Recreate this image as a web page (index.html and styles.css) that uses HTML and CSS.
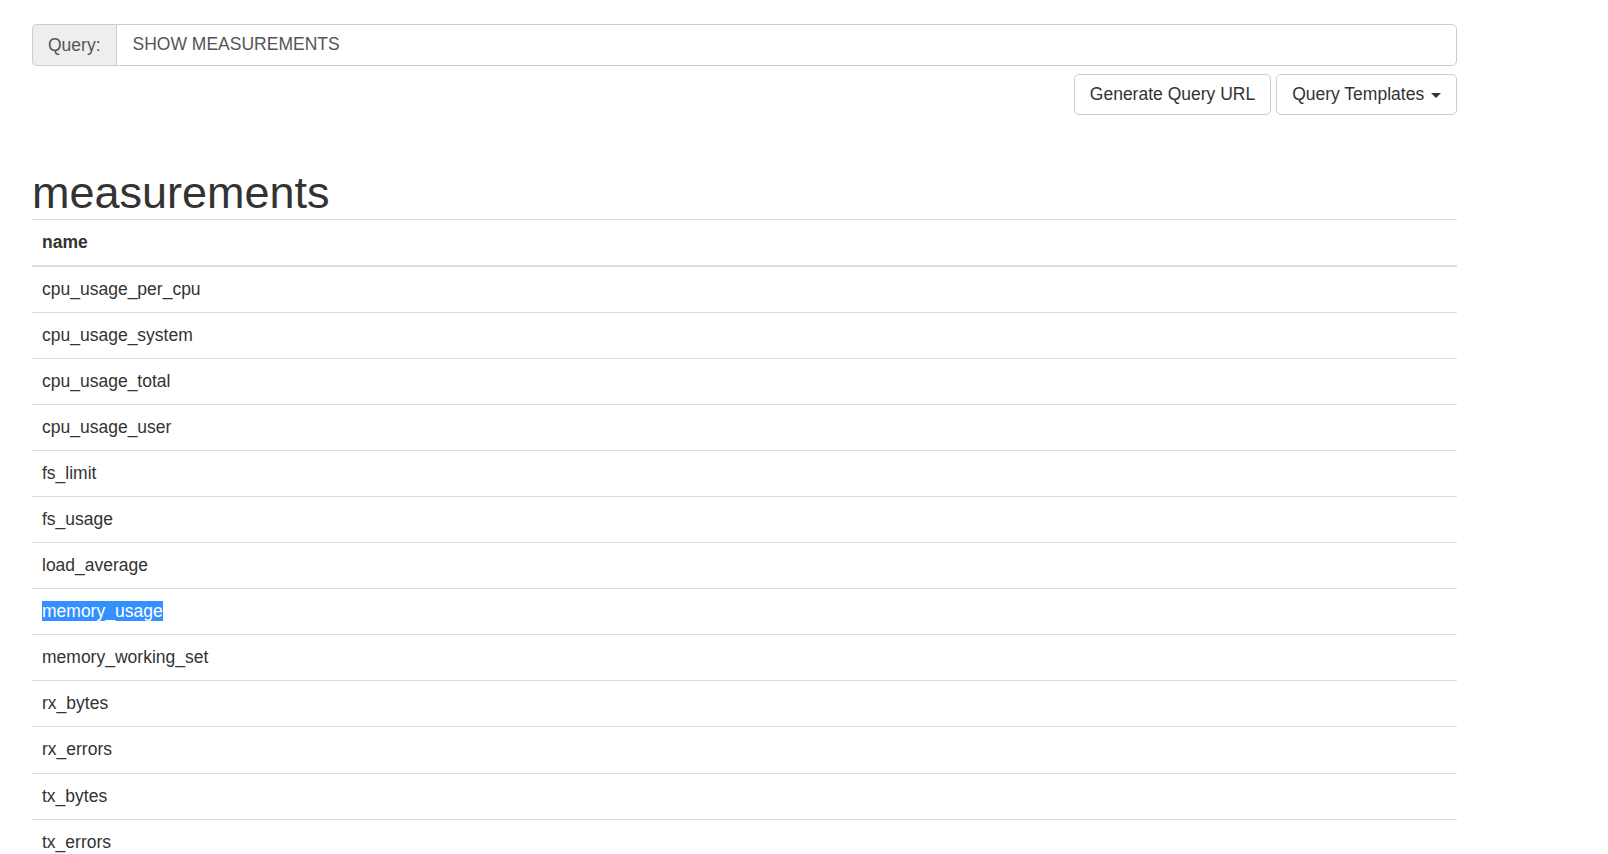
FILE: index.html
```html
<!DOCTYPE html>
<html lang="en">
<head>
  <meta charset="UTF-8">
  <title>InfluxDB - Admin Interface</title>
  <link rel="stylesheet" href="styles.css">
</head>
<body>

<div class="container">
  <div class="input-group">
    <span class="input-addon">Query:</span>
    <input class="query-input" type="text" value="SHOW MEASUREMENTS">
  </div>

  <div class="actions">
    <button class="btn">Generate Query URL</button>
    <button class="btn">Query Templates <span class="caret"></span></button>
  </div>

  <h1>measurements</h1>

  <table class="table">
    <thead>
      <tr><th>name</th></tr>
    </thead>
    <tbody>
      <tr><td>cpu_usage_per_cpu</td></tr>
      <tr><td>cpu_usage_system</td></tr>
      <tr><td>cpu_usage_total</td></tr>
      <tr><td>cpu_usage_user</td></tr>
      <tr><td>fs_limit</td></tr>
      <tr><td>fs_usage</td></tr>
      <tr><td>load_average</td></tr>
      <tr><td><span class="selected">memory_usage</span></td></tr>
      <tr><td>memory_working_set</td></tr>
      <tr><td>rx_bytes</td></tr>
      <tr><td>rx_errors</td></tr>
      <tr><td>tx_bytes</td></tr>
      <tr><td>tx_errors</td></tr>
    </tbody>
  </table>
</div>

</body>
</html>
```

FILE: styles.css
```css
* { box-sizing: border-box; }
body {
  margin: 0;
  background: #fff;
  color: #333;
  font-family: "Liberation Sans", Arial, Helvetica, sans-serif;
  font-size: 17.5px;
  line-height: 25px;
}
.container {
  width: 1457px;
  padding: 24px 0 0 32px;
}
.input-group {
  display: flex;
  height: 42px;
}
.input-addon {
  padding: 7px 15px;
  background: #eee;
  color: #555;
  border: 1px solid #ccc;
  border-right: none;
  border-radius: 5px 0 0 5px;
  line-height: 26px;
}
.query-input {
  flex: 1;
  height: 42px;
  padding: 6px 15px 8px 16px;
  border: 1px solid #ccc;
  border-radius: 0 5px 5px 0;
  font-family: inherit;
  font-size: 17.5px;
  color: #555;
  outline: none;
}
.actions {
  display: flex;
  justify-content: flex-end;
  gap: 5px;
  margin-top: 8px;
}
.btn {
  height: 41px;
  padding: 7px 15px;
  background: #fff;
  border: 1px solid #ccc;
  border-radius: 5px;
  color: #333;
  font-family: inherit;
  font-size: 17.5px;
  line-height: 25px;
  cursor: pointer;
}
.caret {
  display: inline-block;
  width: 0;
  height: 0;
  margin-left: 2px;
  vertical-align: middle;
  border-top: 5px solid #333;
  border-left: 5px solid transparent;
  border-right: 5px solid transparent;
}
h1 {
  font-size: 45px;
  font-weight: 500;
  line-height: 49.5px;
  margin: 53px 0 1px;
}
.table {
  width: 100%;
  border-collapse: collapse;
  border-top: 1px solid #ddd;
}
.table th {
  text-align: left;
  font-weight: bold;
  padding: 10px;
  border-bottom: 2px solid #ddd;
}
.table td {
  padding: 10px;
  line-height: 25.1px;
  border-bottom: 1px solid #ddd;
}
.selected {
  background: #3390ff;
  color: #fff;
}
```
